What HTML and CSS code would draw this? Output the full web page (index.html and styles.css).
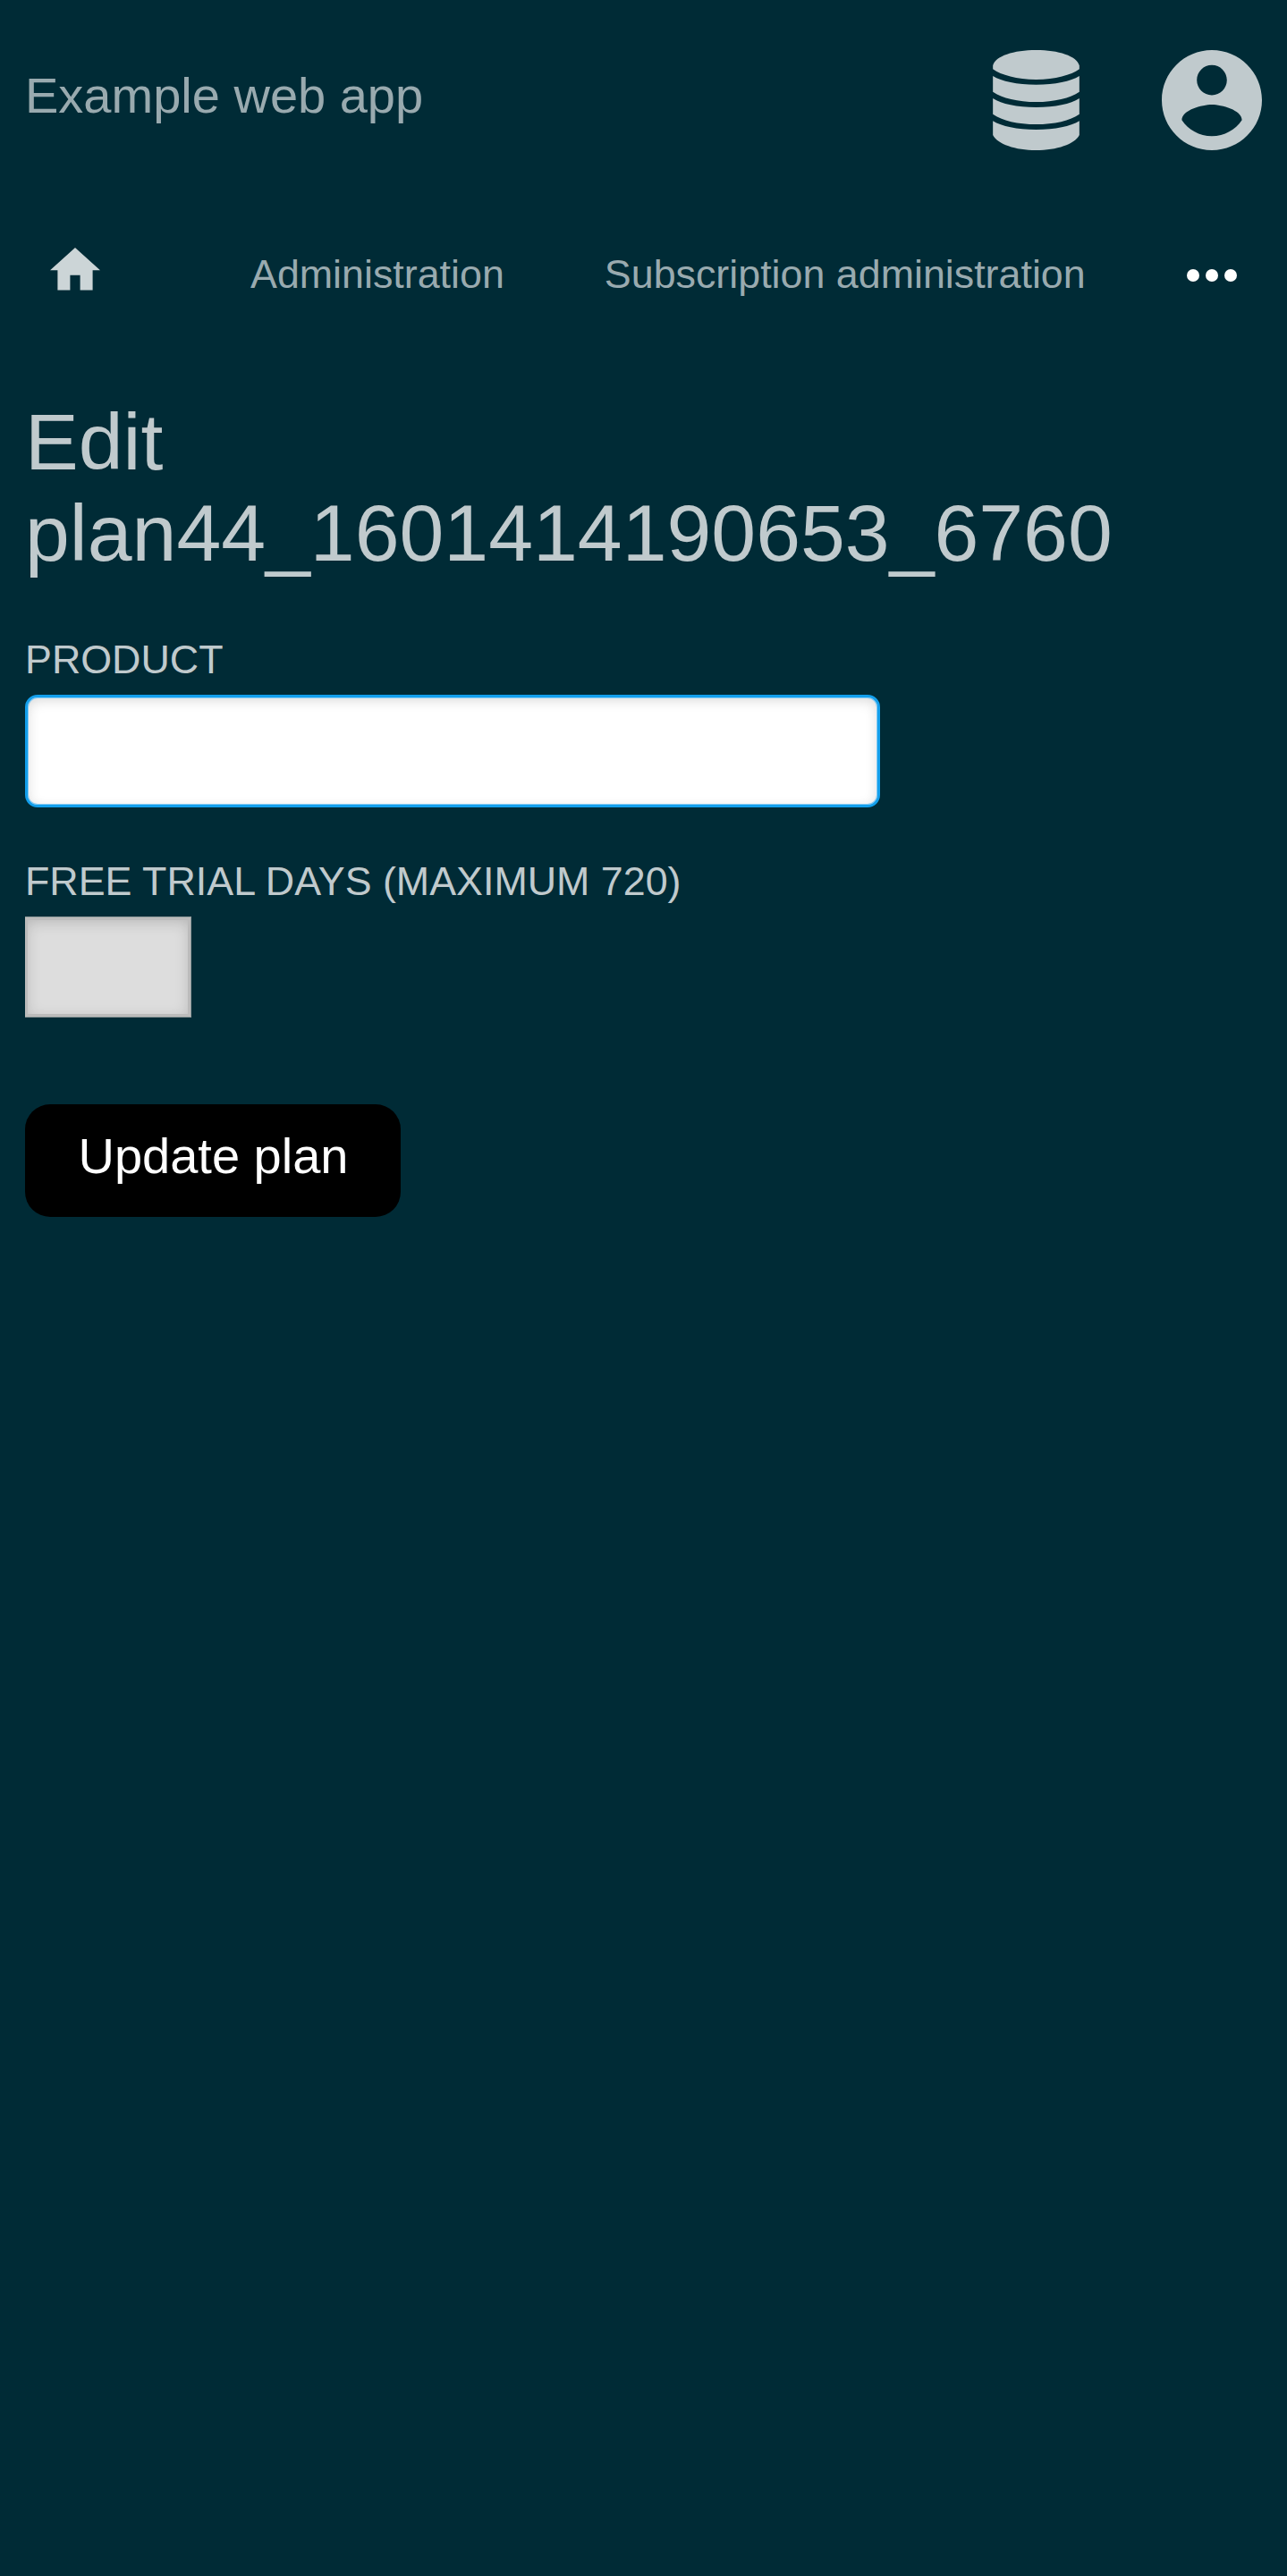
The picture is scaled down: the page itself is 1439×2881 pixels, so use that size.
FILE: index.html
```html
<!DOCTYPE html>
<html lang="en">
<head>
<meta charset="utf-8">
<title>Edit plan</title>
<link rel="stylesheet" href="styles.css">
</head>
<body>
<header class="header">
  <a class="brand">Example web app</a>
  <div class="header-icons">
    <svg class="icon-db" viewBox="0 0 290 336"><path d="M0 52C8 20 70 0 145 0S282 20 290 52V64C262 84 210 99 145 99S28 84 0 64ZM0 87C30 105 80 116 145 116S260 105 290 87V140C260 161 205 174 145 174S30 161 0 140ZM0 162C30 181 80 192 145 192S260 181 290 162V215C260 237 205 249 145 249S30 237 0 215ZM0 238C30 256 80 267 145 267S260 256 290 238V285C274 316 215 336 145 336S16 316 0 285Z"/></svg>
    <svg class="icon-account" viewBox="2 2 20 20"><path d="M12 2C6.48 2 2 6.48 2 12s4.48 10 10 10 10-4.48 10-10S17.52 2 12 2zm0 3c1.66 0 3 1.34 3 3s-1.34 3-3 3-3-1.34-3-3 1.34-3 3-3zm0 14.2c-2.5 0-4.71-1.28-6-3.22.03-1.99 4-3.08 6-3.08 1.99 0 5.97 1.09 6 3.08-1.29 1.94-3.5 3.22-6 3.22z"/></svg>
  </div>
</header>
<nav class="nav">
  <svg class="icon-home" viewBox="2 3 20 17"><path d="M10 20v-6h4v6h5v-8h3L12 3 2 12h3v8z"/></svg>
  <a class="nav-link">Administration</a>
  <a class="nav-link">Subscription administration</a>
  <svg class="icon-more" viewBox="0 0 56 14"><circle cx="7" cy="7" r="7"/><circle cx="28" cy="7" r="7"/><circle cx="49" cy="7" r="7"/></svg>
</nav>
<main class="content">
  <h1 class="title">Edit plan44_1601414190653_6760</h1>
  <form class="form">
    <label class="label" for="product">Product</label>
    <input class="product" id="product" type="text">
    <label class="label" for="trial">Free trial days (maximum 720)</label>
    <input class="trial" id="trial" type="text">
    <button class="submit" type="button">Update plan</button>
  </form>
</main>
</body>
</html>
```
FILE: styles.css
```css
* { box-sizing: border-box; }
body {
  margin: 0;
  min-height: 2881px;
  background: #002b36;
  color: #c0cacd;
  font-family: "Liberation Sans", Arial, sans-serif;
}
svg { display: block; flex: none; }
.header {
  display: flex;
  justify-content: space-between;
  height: 224px;
  padding: 56px 28px 0;
}
.brand {
  padding-top: 19px;
  font-size: 56px;
  line-height: 64px;
  color: #99aaaf;
}
.header-icons { display: flex; gap: 92px; }
.icon-db { width: 97px; height: 112px; fill: #c0cacd; }
.icon-account { width: 112px; height: 112px; fill: #c0cacd; }
.nav {
  display: flex;
  align-items: flex-start;
  height: 219px;
  padding: 53px 56px 0 56px;
}
.icon-home { width: 56px; height: 47.6px; fill: #ccd5d7; }
.nav-link {
  margin: 3px 0 0 168px;
  font-size: 44.8px;
  line-height: 52px;
  color: #99aaaf;
}
.nav-link + .nav-link { margin-left: 112px; }
.icon-more { width: 56px; height: 14px; margin: 24px 0 0 auto; fill: #fff; }
.content { padding: 0 28px; }
.title {
  width: 1250px;
  margin: 0;
  font-size: 89.6px;
  line-height: 102px;
  font-weight: 400;
}
.form { display: flex; flex-direction: column; align-items: flex-start; padding-top: 64px; }
.label { font-size: 44.8px; line-height: 52px; text-transform: uppercase; }
.product, .trial { margin: 0; padding: 0 14px; outline: 0; font: inherit; font-size: 56px; }
.product {
  width: 956px;
  height: 126px;
  margin: 14px 0 56px;
  border: 3px solid #139fec;
  border-radius: 14px;
  background: #fff;
  box-shadow: inset 0 0 0 1px #86cbf3, inset 0 3.5px 14px rgba(0, 0, 0, .15);
}
.trial {
  width: 186px;
  height: 113px;
  margin: 14px 0 97px;
  border: 1px solid #909a9b;
  border-left: 0;
  background: #ddd;
  box-shadow: inset 0 0 0 3px #bbb, inset 0 3.5px 17px rgba(0, 0, 0, .2);
}
.submit {
  width: 420px;
  height: 126px;
  padding: 0 0 12px 1px;
  border: 0;
  border-radius: 28px;
  background: #000;
  color: #fff;
  font: 56px "Liberation Sans", Arial, sans-serif;
}
```
